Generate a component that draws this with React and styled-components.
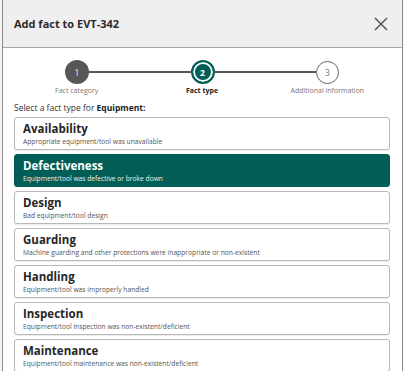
import React from "react";
import styled, { createGlobalStyle, css } from "styled-components";

const GlobalStyle = createGlobalStyle`
  html, body {
    margin: 0;
    padding: 0;
    background: #ffffff;
    overflow: hidden;
  }
  body {
    font-family: "Open Sans", "Noto Sans", sans-serif;
    color: #222;
  }
`;

const Page = styled.div`
  width: 404px;
  height: 371px;
  display: flex;
  background: #f4f4f4;
`;

const Dialog = styled.div`
  margin-left: 2px;
  width: 399px;
  height: 371px;
  background: #fff;
  border-left: 1px solid #8c8c8c;
  border-right: 1px solid #8c8c8c;
  display: flex;
  flex-direction: column;
  overflow: hidden;
`;

const Header = styled.div`
  height: 47px;
  flex: none;
  background: #efefef;
  border-bottom: 1px solid #a6a6a6;
  display: flex;
  align-items: center;
  justify-content: space-between;
  padding: 0 12px 0 11px;
`;

const Title = styled.h2`
  margin: 0;
  font-size: 11px;
  font-weight: 700;
  color: #2b2b2b;
`;

const CloseButton = styled.button`
  border: 0;
  background: none;
  padding: 0;
  width: 18px;
  height: 18px;
  display: flex;
  align-items: center;
  justify-content: center;
  cursor: pointer;
`;

const Body = styled.div`
  padding: 12px 12px 0 11px;
  display: flex;
  flex-direction: column;
`;

const Track = styled.div`
  display: flex;
  align-items: center;
  padding: 0 51px 0 51px;
  height: 24px;
`;

const Connector = styled.div`
  flex: 1;
  height: 2px;
  background: ${(p) => (p.$done ? "#555" : "#8a8a8a")};
`;

const Circle = styled.div`
  flex: none;
  box-sizing: border-box;
  border-radius: 50%;
  display: flex;
  align-items: center;
  justify-content: center;
  font-size: 8.5px;
  ${(p) =>
    p.$state === "done" &&
    css`
      width: 24px;
      height: 24px;
      background: #575757;
      color: #e8e8e8;
    `}
  ${(p) =>
    p.$state === "active" &&
    css`
      width: 24px;
      height: 24px;
      background: #005e56;
      border: 2px solid #005e56;
      box-shadow: inset 0 0 0 2px #fff;
      color: #fff;
      font-weight: 700;
    `}
  ${(p) =>
    p.$state === "todo" &&
    css`
      width: 23px;
      height: 23px;
      background: #fff;
      border: 1.5px solid #666;
      color: #777;
    `}
`;

const Labels = styled.div`
  display: grid;
  grid-template-columns: 1fr 1fr 1fr;
  margin-top: 1px;
`;

const StepLabel = styled.div`
  text-align: center;
  font-size: 7px;
  line-height: 11px;
  color: ${(p) => (p.$active ? "#222" : "#777")};
  font-weight: ${(p) => (p.$active ? 700 : 400)};
`;

const Prompt = styled.p`
  margin: 6px 0 4px 0;
  font-size: 8.5px;
  line-height: 11px;
  color: #333;
  b {
    font-weight: 700;
    color: #222;
  }
`;

const List = styled.div`
  display: flex;
  flex-direction: column;
  gap: 4px;
`;

const Card = styled.div`
  box-sizing: border-box;
  height: 33px;
  border: 1px solid ${(p) => (p.$selected ? "#005e56" : "#b9b9b9")};
  border-radius: 3px;
  background: ${(p) => (p.$selected ? "#005e56" : "#fff")};
  box-shadow: ${(p) => (p.$selected ? "none" : "0 1px 1px rgba(0,0,0,0.08)")};
  padding: 3px 8px 0 8px;
  display: flex;
  flex-direction: column;
  cursor: pointer;
`;

const CardTitle = styled.div`
  font-size: 11.5px;
  line-height: 16px;
  font-weight: 700;
  color: ${(p) => (p.$selected ? "#fff" : "#262626")};
`;

const CardDesc = styled.div`
  font-size: 6.7px;
  line-height: 10px;
  color: ${(p) => (p.$selected ? "#f0f0f0" : "#555")};
`;

const factTypes = [
  { name: "Availability", desc: "Appropriate equipment/tool was unavailable" },
  { name: "Defectiveness", desc: "Equipment/tool was defective or broke down" },
  { name: "Design", desc: "Bad equipment/tool design" },
  { name: "Guarding", desc: "Machine guarding and other protections were inappropriate or non-existent" },
  { name: "Handling", desc: "Equipment/tool was improperly handled" },
  { name: "Inspection", desc: "Equipment/tool inspection was non-existent/deficient" },
  { name: "Maintenance", desc: "Equipment/tool maintenance was non-existent/deficient" },
];

export default function App() {
  const selected = "Defectiveness";
  return (
    <Page>
      <GlobalStyle />
      <Dialog>
        <Header>
          <Title>Add fact to EVT-342</Title>
          <CloseButton aria-label="Close">
            <svg width="14" height="14" viewBox="0 0 14 14">
              <path d="M1 1 L13 13 M13 1 L1 13" stroke="#555" strokeWidth="1.5" fill="none" />
            </svg>
          </CloseButton>
        </Header>
        <Body>
          <Track>
            <Circle $state="done">1</Circle>
            <Connector $done />
            <Circle $state="active">2</Circle>
            <Connector $done />
            <Circle $state="todo">3</Circle>
          </Track>
          <Labels>
            <StepLabel>Fact category</StepLabel>
            <StepLabel $active>Fact type</StepLabel>
            <StepLabel>Additional information</StepLabel>
          </Labels>
          <Prompt>
            Select a fact type for <b>Equipment:</b>
          </Prompt>
          <List>
            {factTypes.map((f) => (
              <Card key={f.name} $selected={f.name === selected}>
                <CardTitle $selected={f.name === selected}>{f.name}</CardTitle>
                <CardDesc $selected={f.name === selected}>{f.desc}</CardDesc>
              </Card>
            ))}
          </List>
        </Body>
      </Dialog>
    </Page>
  );
}
